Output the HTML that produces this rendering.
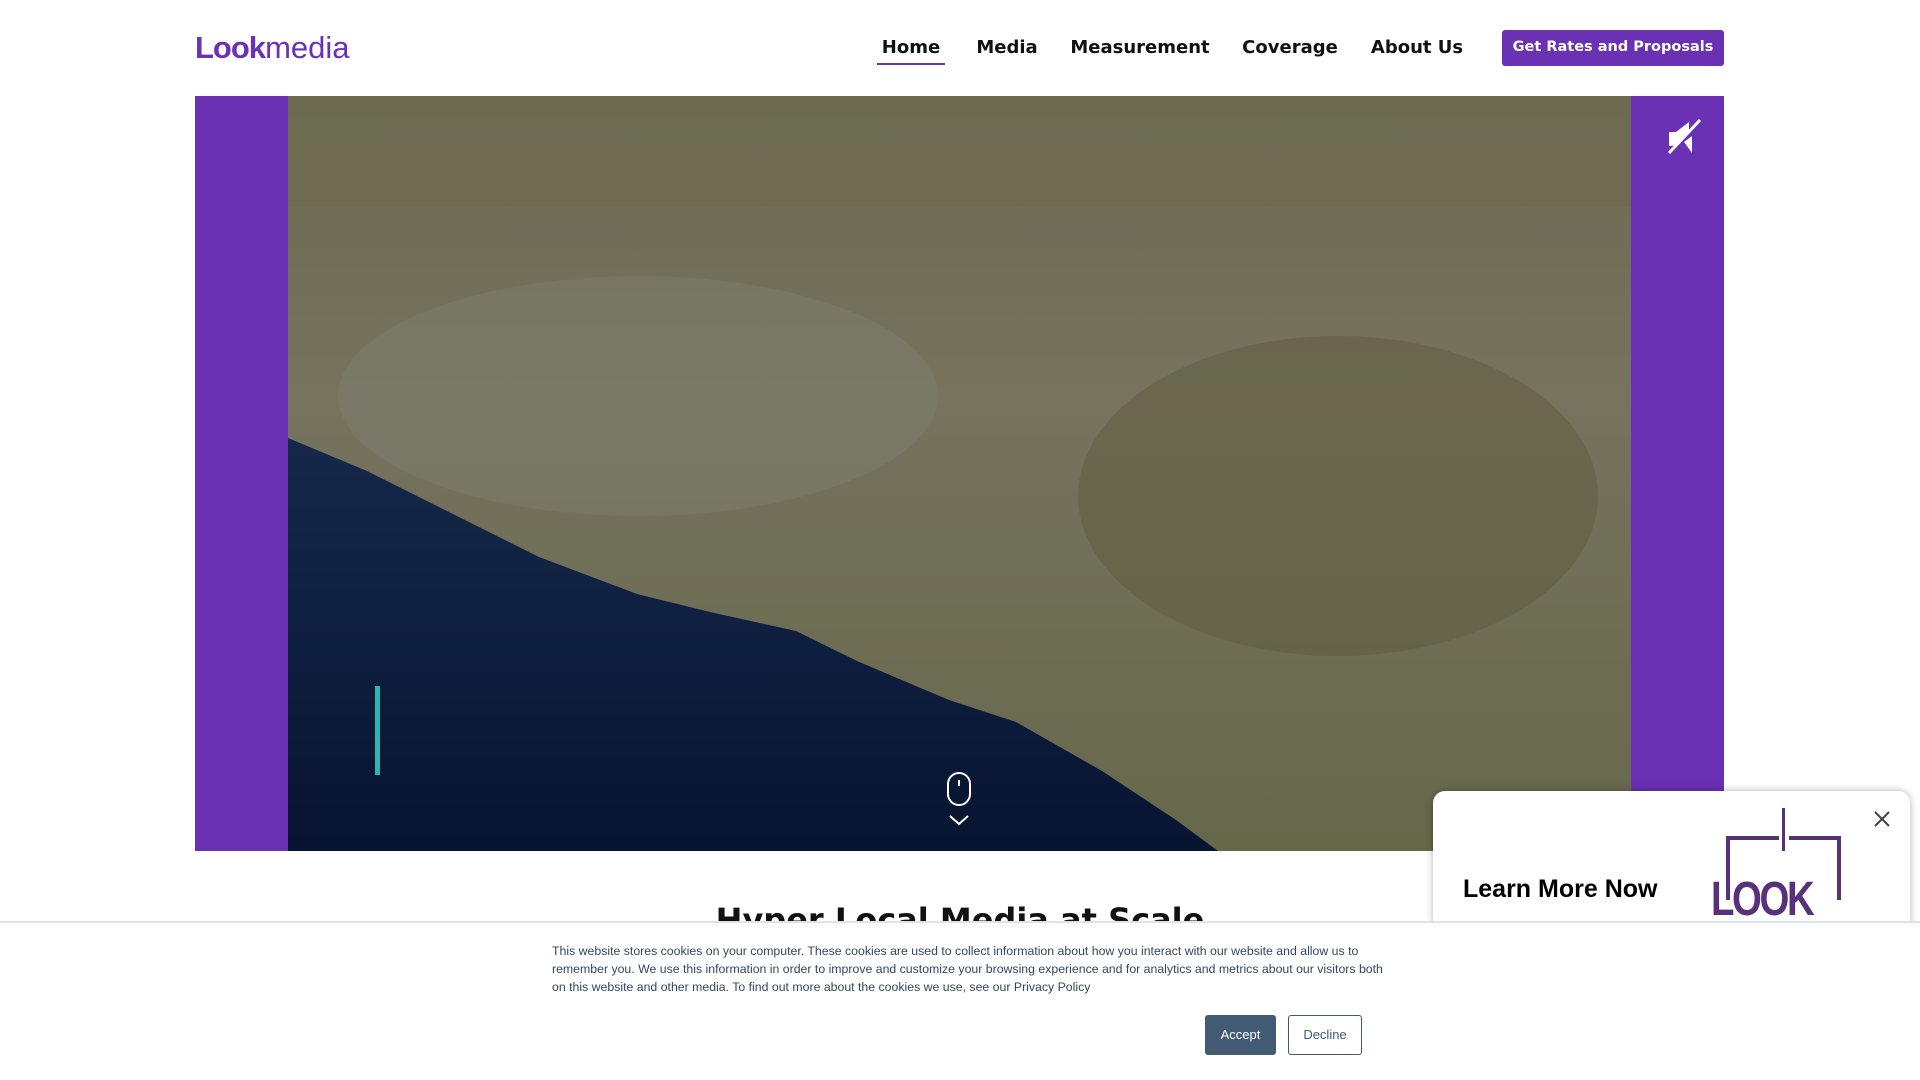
<!DOCTYPE html>
<html><head><meta charset="utf-8"><style>
*{margin:0;padding:0;box-sizing:border-box}
body{width:1920px;height:1080px;overflow:hidden;background:#fff;font-family:"DejaVu Sans","Liberation Sans",sans-serif;position:relative}
.logo{position:absolute;left:195px;top:30px;font-family:"Liberation Sans",sans-serif;font-size:31px;color:#6a31b5;letter-spacing:-1px}
.logo b{font-weight:900}.logo span{font-weight:300;letter-spacing:0}
.nav a{position:absolute;top:37px;font-size:18px;font-weight:bold;color:#111;text-decoration:none;transform:translateX(-50%);white-space:nowrap}
.ul{position:absolute;left:877px;top:63px;width:68px;height:2px;background:#6a31b5}
.btn{position:absolute;left:1502px;top:30px;width:222px;height:36px;background:#6a31b5;border-radius:3px;color:#fff;font-weight:bold;font-size:14.5px;text-align:center;line-height:34px}
.hero{position:absolute;left:195px;top:96px;width:1529px;height:755px;background:#6a31b5}
.vid{position:absolute;left:93px;top:0;width:1343px;height:755px;overflow:hidden}
h1{position:absolute;left:0;width:1920px;top:901px;text-align:center;font-size:32px;font-weight:bold;color:#111}
.cookie{position:absolute;left:0;top:921px;width:1920px;height:159px;background:#fff;border-top:2px solid #dde3ea}
.cookie p{position:absolute;left:552px;top:19px;width:845px;font-family:"Liberation Sans",sans-serif;font-size:12.3px;line-height:18px;color:#33475b}
.acc{position:absolute;left:1205px;top:92px;width:71px;height:40px;background:#435a75;color:#fff;border-radius:3px;font-family:"Liberation Sans",sans-serif;font-size:13px;text-align:center;line-height:40px}
.dec{position:absolute;left:1288px;top:92px;width:74px;height:40px;border:1px solid #435a75;color:#435a75;border-radius:3px;font-family:"Liberation Sans",sans-serif;font-size:13px;text-align:center;line-height:38px}
.pop{position:absolute;left:1433px;top:791px;width:477px;height:140px;background:#fff;border-radius:12px;box-shadow:0 0 8px rgba(0,0,0,.3);overflow:hidden}
.pop .t{position:absolute;left:30px;top:84px;font-family:"Liberation Sans",sans-serif;font-weight:bold;font-size:25px;color:#000}
</style></head><body>
<div class="logo"><b>Look</b><span>media</span></div>
<div class="nav"><a style="left:911px">Home</a><a style="left:1007px">Media</a><a style="left:1140px">Measurement</a><a style="left:1290px">Coverage</a><a style="left:1417px">About Us</a></div>
<div class="ul"></div>
<div class="btn">Get Rates and Proposals</div>
<div class="hero">
<div class="vid"><svg width="1343" height="755">
<defs><linearGradient id="g" x1="0" y1="0" x2="0" y2="1"><stop offset="0" stop-color="#6c6a52"/><stop offset=".4" stop-color="#76735f"/><stop offset="1" stop-color="#66684a"/></linearGradient>
<linearGradient id="o" x1="0" y1="0" x2="0" y2="1"><stop offset="0" stop-color="#16284a"/><stop offset="1" stop-color="#071432"/></linearGradient></defs>
<rect width="1343" height="755" fill="url(#g)"/>
<rect x="0" y="0" width="1343" height="110" fill="#6e6b50" opacity=".6"/>
<ellipse cx="1050" cy="400" rx="260" ry="160" fill="#5d5c3e" opacity=".5"/>
<ellipse cx="350" cy="300" rx="300" ry="120" fill="#85847a" opacity=".3"/>
<polygon points="0,342 79,375 165,418 251,461 349,498 422,516 508,535 569,565 661,604 728,626 814,675 888,724 930,755 0,755" fill="url(#o)"/>
<rect x="87" y="590" width="5" height="89" fill="#2bb5b5"/>
</svg>
<svg style="position:absolute;left:657px;top:676px" width="30" height="80"><rect x="3" y="1" width="22" height="32" rx="11" fill="none" stroke="#fff" stroke-width="2"/><line x1="14" y1="8" x2="14" y2="14" stroke="#fff" stroke-width="2"/><polyline points="5,44 14,52 23,44" fill="none" stroke="#fff" stroke-width="2"/></svg>
</div>
<svg style="position:absolute;left:1470px;top:20px" width="40" height="40"><polygon points="4,16 11,16 11,30 4,30" fill="#fff"/><polygon points="11,16 24,6 24,16 11,30" fill="#fff"/><polygon points="19,26 27,20 27,37" fill="#fff"/><line x1="4" y1="37" x2="35" y2="4" stroke="#fff" stroke-width="3"/></svg>
</div>
<h1>Hyper Local Media at Scale</h1>
<div class="pop"><div class="t">Learn More Now</div>
<div style="position:absolute;left:278px;top:81px;font-family:'Liberation Sans',sans-serif;font-weight:900;font-size:48px;color:#57317a;letter-spacing:-3px;transform:scaleX(.8);transform-origin:left">LOOK</div>
<div style="position:absolute;left:293px;top:45px;width:115px;height:64px;border:4px solid #57317a;border-bottom:none"></div>
<div style="position:absolute;left:346px;top:17px;width:10px;height:45px;background:#fff"></div>
<div style="position:absolute;left:349px;top:17px;width:3px;height:43px;background:#57317a"></div>
<svg style="position:absolute;left:440px;top:19px" width="18" height="18"><path d="M2 2L16 16M16 2L2 16" stroke="#444" stroke-width="2"/></svg>
</div>
<div class="cookie"><p>This website stores cookies on your computer. These cookies are used to collect information about how you interact with our website and allow us to remember you. We use this information in order to improve and customize your browsing experience and for analytics and metrics about our visitors both on this website and other media. To find out more about the cookies we use, see our Privacy Policy</p>
<div class="acc">Accept</div><div class="dec">Decline</div></div>
</body></html>
